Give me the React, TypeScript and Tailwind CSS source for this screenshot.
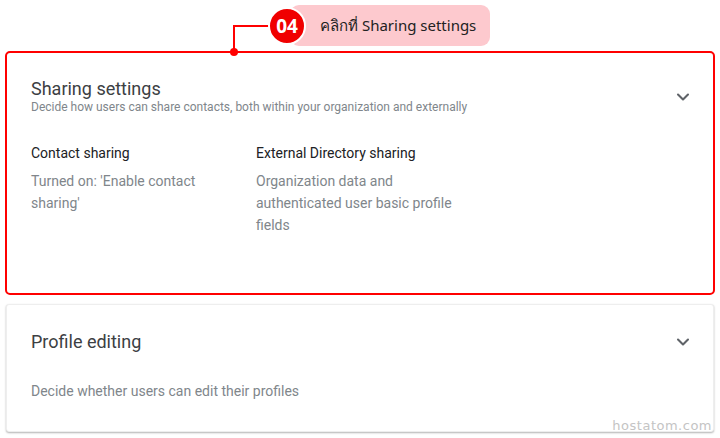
import { ChevronDown } from 'lucide-react'

export default function App() {
  return (
    <div className="relative h-[438px] w-[720px] overflow-hidden bg-white font-['Roboto',sans-serif]">
      {/* callout */}
      <div className="absolute top-[25px] left-[233px] h-[2px] w-[40px] bg-[#ff0000]" />
      <div className="absolute top-[25px] left-[233px] h-[27px] w-[2px] bg-[#ff0000]" />
      <div className="absolute top-[48px] left-[230px] z-10 h-[8px] w-[8px] rounded-full bg-[#ff0000]" />
      <div className="absolute top-[5px] left-[290px] flex h-[41px] w-[200px] items-center rounded-[9px] bg-[#fdc9ce] pl-[30px] font-['Noto_Sans','DejaVu_Sans',sans-serif] text-[15px] text-[#222]">
        คลิกที่ Sharing settings
      </div>
      <div className="absolute top-[7px] left-[268px] flex h-[38px] w-[38px] items-center justify-center rounded-full border-2 border-white bg-[#f00000] font-['Noto_Sans',sans-serif] text-[19px] font-bold text-white">
        04
      </div>

      <div className="flex flex-col pt-[51px]">
        <div className="mx-[5px] h-[244px] rounded-[5px] border-2 border-[#ff0000] bg-white">
          <div className="flex items-start justify-between pt-[25px] pr-[20px] pl-[24px]">
            <div>
              <div className="text-[18px] leading-[22px] text-[#3c4043]">Sharing settings</div>
              <div className="text-[12px] leading-[15px] text-[#80868b]">
                Decide how users can share contacts, both within your organization and externally
              </div>
            </div>
            <ChevronDown size={20} strokeWidth={2.5} className="mt-[9px] text-[#5f6368]" />
          </div>
          <div className="flex pt-[28px] pl-[24px]">
            <div className="w-[225px]">
              <div className="text-[14px] leading-[20px] text-[#202124]">Contact sharing</div>
              <div className="mt-[7px] w-[185px] text-[14px] leading-[22px] text-[#80868b]">
                Turned on: 'Enable contact sharing'
              </div>
            </div>
            <div className="w-[210px]">
              <div className="text-[14px] leading-[20px] text-[#202124]">External Directory sharing</div>
              <div className="mt-[7px] text-[14px] leading-[22px] text-[#80868b]">
                Organization data and authenticated user basic profile fields
              </div>
            </div>
          </div>
        </div>

        <div className="mx-[6px] mt-[9px] h-[128px] rounded-[3px] border border-[#eeeeee] bg-white shadow-[0_1px_2px_rgba(0,0,0,0.3)]">
          <div className="flex items-start justify-between pt-[26px] pr-[20px] pl-[24px]">
            <div className="text-[18px] leading-[22px] text-[#3c4043]">Profile editing</div>
            <ChevronDown size={20} strokeWidth={2.5} className="mt-[1px] text-[#5f6368]" />
          </div>
          <div className="pt-[28px] pl-[24px] text-[14px] leading-[20px] text-[#80868b]">
            Decide whether users can edit their profiles
          </div>
        </div>
      </div>

      <div className="absolute right-[8px] bottom-[3px] font-['DejaVu_Sans',sans-serif] text-[13px] tracking-[0.5px] text-[#c4c4c4]">
        hostatom.com
      </div>
    </div>
  )
}
